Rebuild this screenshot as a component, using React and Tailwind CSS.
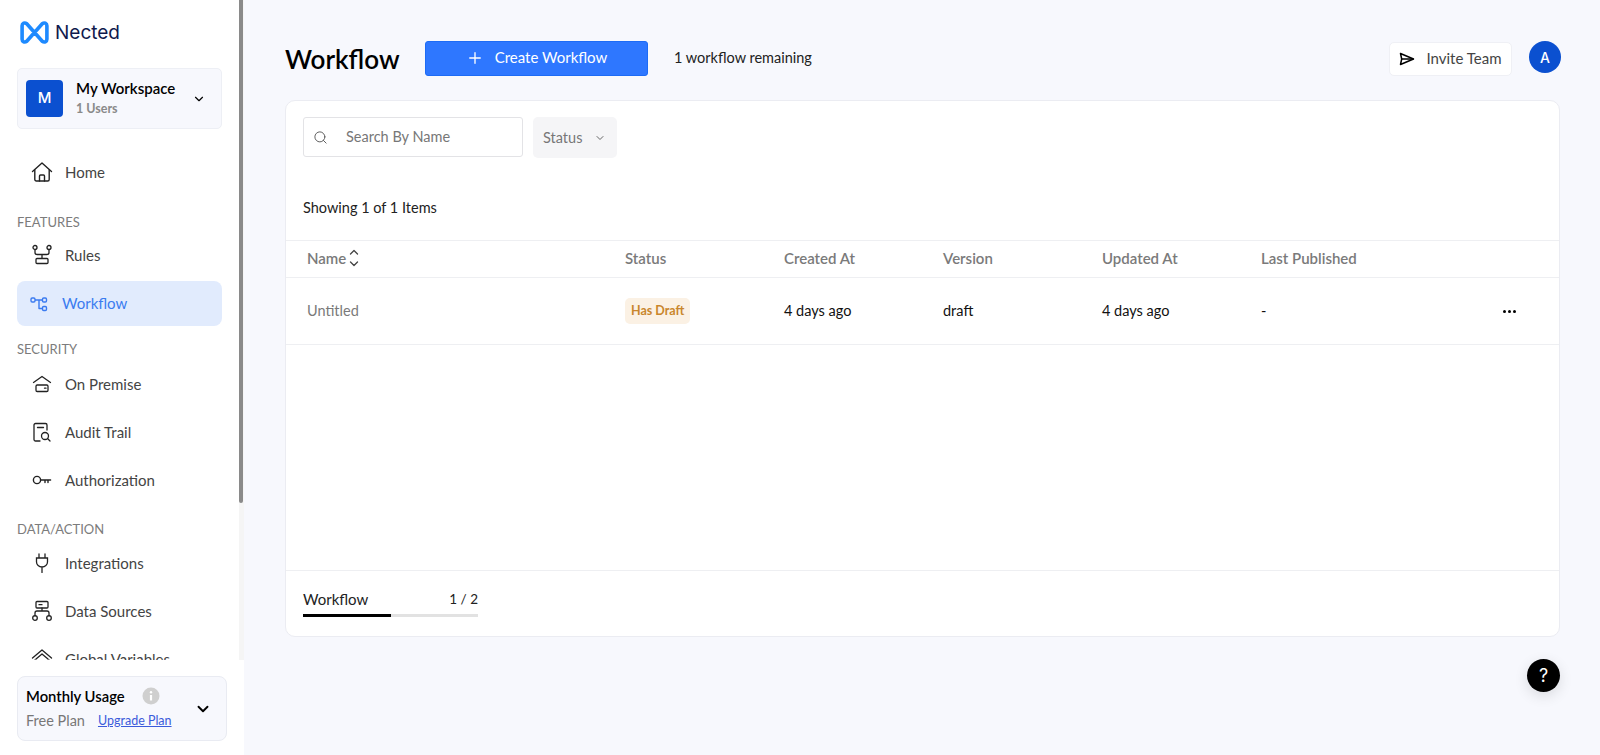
import React from 'react'
import { ChevronDown, Plus, Search } from 'lucide-react'

const Logo = () => (
  <svg width="31" height="25" viewBox="0 0 30 24" fill="none">
    <defs>
      <linearGradient id="lg" x1="0" y1="0" x2="30" y2="24">
        <stop offset="0" stopColor="#1e8bff" />
        <stop offset="1" stopColor="#1a55ee" />
      </linearGradient>
    </defs>
    <path d="M3 5.500C3 3 5.500 2 7.500 3.500L22.500 20.500C24.500 22 27 21 27 18.500V5.500C27 3 24.500 2 22.500 3.500L7.500 20.500C5.500 22 3 21 3 18.500Z" stroke="url(#lg)" strokeWidth="3.500" strokeLinejoin="round" />
  </svg>
)

const HomeIcon = () => (
  <svg width="22" height="22" viewBox="0 0 22 22" fill="none" stroke="#222" strokeWidth="1.4" strokeLinejoin="round" strokeLinecap="round">
    <path d="M1.500 10.500L11 2l9.500 8.500" />
    <path d="M3.800 9v9.500a1.500 1.500 0 0 0 1.500 1.500h11.400a1.500 1.500 0 0 0 1.500-1.500V9" />
    <path d="M8.500 20v-5a1 1 0 0 1 1-1h3a1 1 0 0 1 1 1v5" />
  </svg>
)
const RulesIcon = () => (
  <svg width="22" height="22" viewBox="0 0 22 22" fill="none" stroke="#222" strokeWidth="1.3" strokeLinejoin="round">
    <circle cx="4" cy="3.500" r="2" />
    <circle cx="18" cy="3.500" r="2" />
    <path d="M4 5.500v3a2 2 0 0 0 2 2h10a2 2 0 0 0 2-2v-3M11 10.500v4" />
    <rect x="5" y="14.500" width="12" height="5" rx="1" />
  </svg>
)
const WorkflowIcon = () => (
  <svg width="18" height="16" viewBox="0 0 18 16" fill="none" stroke="#3b7bf0" strokeWidth="1.400" strokeLinejoin="round">
    <rect x="1" y="2" width="4" height="4" rx="1.200" />
    <rect x="12.500" y="2" width="4" height="4" rx="1.200" />
    <rect x="12.500" y="10.500" width="4" height="4" rx="1.200" />
    <path d="M5 4h7.500M9 4v8.500h3.500" />
  </svg>
)
const PremiseIcon = () => (
  <svg width="20" height="20" viewBox="0 0 20 20" fill="none" stroke="#222" strokeWidth="1.300" strokeLinejoin="round" strokeLinecap="round">
    <path d="M1.500 8.500L10 2.500l8.500 6" />
    <rect x="4" y="11" width="12" height="6.500" rx="1.200" />
    <path d="M12.500 14.200h1.500" />
  </svg>
)
const AuditIcon = () => (
  <svg width="20" height="20" viewBox="0 0 20 20" fill="none" stroke="#222" strokeWidth="1.300" strokeLinecap="round">
    <path d="M8 19H3.500A1.500 1.500 0 0 1 2 17.500V3A1.500 1.500 0 0 1 3.500 1.500h10A1.500 1.500 0 0 1 15 3v5" />
    <path d="M5.500 5.500h6" />
    <circle cx="13" cy="14" r="3.500" />
    <path d="M15.500 16.500L18 19" />
  </svg>
)
const KeyIcon = () => (
  <svg width="20" height="12" viewBox="0 0 20 12" fill="none" stroke="#222" strokeWidth="1.400" strokeLinecap="round">
    <circle cx="5" cy="6" r="3.600" />
    <path d="M8.600 6h10M13 6v2.500M16 6v2.500" />
  </svg>
)
const PlugIcon = () => (
  <svg width="18" height="20" viewBox="0 0 18 20" fill="none" stroke="#222" strokeWidth="1.300" strokeLinecap="round">
    <path d="M6 1v4M12 1v4M3.500 5h11v4a5.500 5 0 0 1-11 0zM9 14v5.500" />
  </svg>
)
const DataIcon = () => (
  <svg width="22" height="22" viewBox="0 0 22 22" fill="none" stroke="#222" strokeWidth="1.300" strokeLinecap="round">
    <rect x="5" y="1.500" width="12" height="6.500" rx="1" />
    <path d="M11 8v3M4 16v-3a2 2 0 0 1 2-2h10a2 2 0 0 1 2 2v3M8 4.700h3" />
    <circle cx="4" cy="18" r="2.300" />
    <circle cx="18" cy="18" r="2.300" />
  </svg>
)
const GlobalIcon = () => (
  <svg width="22" height="22" viewBox="0 0 22 22" fill="none" stroke="#222" strokeWidth="1.300" strokeLinecap="round" strokeLinejoin="round">
    <path d="M1.500 10L11 2l9.500 8M5 11l6-5 6 5M7 13l2 2 2-2 2 2 2-2" />
    <path d="M4 12v8h14v-8" />
  </svg>
)
const SendIcon = () => (
  <svg width="16" height="14" viewBox="0 0 16 14" fill="none" stroke="#000" strokeWidth="1.500" strokeLinejoin="round">
    <path d="M1.500 1.500L14.500 7 1.500 12.500l1.200-5.500z" />
    <path d="M2.700 7h11.800" />
  </svg>
)
const SortIcon = () => (
  <svg width="10" height="18" viewBox="0 0 10 18" fill="none" stroke="#444" strokeWidth="1.300" strokeLinecap="round" strokeLinejoin="round">
    <path d="M1.500 5L5 1.500 8.500 5M1.500 13L5 16.500 8.500 13" />
  </svg>
)
const InfoDot = () => (
  <svg width="18" height="18" viewBox="0 0 18 18">
    <circle cx="9" cy="9" r="8.500" fill="#cfcfcf" />
    <circle cx="9" cy="5.300" r="1.200" fill="#fff" />
    <path d="M9 8v5.500" stroke="#fff" strokeWidth="2.200" />
  </svg>
)

function NavItem({ icon, label, className = '' }) {
  return (
    <div className={`flex items-center h-[48px] pb-[2px] pl-[14px] text-[15px] text-[#444] ${className}`}>
      <span className="w-[22px] flex justify-center shrink-0">{icon}</span>
      <span className="ml-[12px]">{label}</span>
    </div>
  )
}

function SectionLabel({ children, className = '' }) {
  return <div className={`text-[13px] leading-[16px] text-[#7c7c7c] ${className}`}>{children}</div>
}

const columns = 'grid grid-cols-[318px_159px_159px_159px_159px_1fr] pl-[21px]'

export default function App() {
  return (
    <div className="flex h-[755px] overflow-hidden bg-[#f7f8fd] text-[#111] font-['Lato',sans-serif]">
      <aside className="relative w-[244px] shrink-0 flex flex-col bg-white">
        <div className="h-[660px] overflow-hidden pl-[17px] pr-[22px]">
          <div className="flex items-center h-[68px] pl-[2px] pb-[4px]">
            <Logo />
            <span className="ml-[5px] mt-[2px] text-[19px] font-normal text-[#101a4d] font-['Inter',sans-serif]">Nected</span>
          </div>
          <div className="flex items-center h-[61px] px-[8px] rounded-[5px] border border-[#edeff5] bg-[#f7f8fd]">
            <div className="w-[37px] h-[37px] rounded-[4px] bg-[#0b50d0] text-white text-[15px] font-medium flex items-center justify-center font-['Inter',sans-serif]">M</div>
            <div className="ml-[13px] flex-1">
              <div className="text-[15px] leading-[19px] font-semibold text-black">My Workspace</div>
              <div className="text-[12.500px] leading-[20px] mt-[1px] font-bold text-[#8a8a8a]">1 Users</div>
            </div>
            <ChevronDown size={14} strokeWidth={2} className="mr-[7px] text-black" />
          </div>
          <NavItem icon={<HomeIcon />} label="Home" className="mt-[20px]" />
          <SectionLabel className="mt-[17px]">FEATURES</SectionLabel>
          <NavItem icon={<RulesIcon />} label="Rules" className="mt-[2px]" />
          <div className="flex items-center h-[45px] pl-[13px] rounded-[8px] bg-[#e1ebfd] text-[15px] text-[#3b7bf0] mt-[1px]">
            <WorkflowIcon />
            <span className="ml-[14px]">Workflow</span>
          </div>
          <SectionLabel className="mt-[15px]">SECURITY</SectionLabel>
          <NavItem icon={<PremiseIcon />} label="On Premise" className="mt-[4px]" />
          <NavItem icon={<AuditIcon />} label="Audit Trail" />
          <NavItem icon={<KeyIcon />} label="Authorization" />
          <SectionLabel className="mt-[16px]">DATA/ACTION</SectionLabel>
          <NavItem icon={<PlugIcon />} label="Integrations" className="mt-[3px]" />
          <NavItem icon={<DataIcon />} label="Data Sources" />
          <NavItem icon={<GlobalIcon />} label="Global Variables" />
        </div>
        <div className="absolute right-0 top-0 h-[660px] w-[5px] bg-[#f5f5f5]">
          <div className="w-[4px] h-[503px] bg-[#8a8a8a] rounded-b-full" />
        </div>
        <div className="mt-[16px] ml-[17px] mr-[17px] h-[65px] rounded-[8px] border border-[#e9ebf2] bg-[#f7f8fd] flex items-center pl-[8px] pr-[14px]">
          <div className="flex-1">
            <div className="flex items-center -mt-[1px]">
              <span className="text-[14.800px] leading-[20px] font-semibold text-black">Monthly Usage</span>
              <span className="ml-[17px]"><InfoDot /></span>
            </div>
            <div className="flex items-center mt-[6px]">
              <span className="text-[14.500px] leading-[18px] text-[#777]">Free Plan</span>
              <span className="ml-[13px] text-[12.500px] leading-[18px] text-[#3b5bdb] underline">Upgrade Plan</span>
            </div>
          </div>
          <ChevronDown size={18} strokeWidth={2.500} className="text-black" />
        </div>
      </aside>

      <main className="relative flex-1 min-w-0 pl-[41px] pr-[40px]">
        <header className="flex items-start h-[100px] pt-[41px] mr-[-1px]">
          <h1 className="w-[114px] text-[26px] leading-[37px] font-semibold text-black whitespace-nowrap">Workflow</h1>
          <button className="ml-[26px] w-[223px] h-[35px] pb-[2px] flex items-center justify-center rounded-[3px] border border-[#1d6bf5] bg-[#2e77ff] text-white text-[15px]">
            <Plus size={18} strokeWidth={1.800} />
            <span className="ml-[11px]">Create Workflow</span>
          </button>
          <span className="ml-[26px] text-[14.500px] leading-[33px] text-[#222]">1 workflow remaining</span>
          <button className="ml-auto w-[123px] h-[34px] mt-[1px] pb-[1px] flex items-center justify-center rounded-[5px] border border-[#eff0f5] bg-white text-[15px] text-[#444]">
            <SendIcon />
            <span className="ml-[11px]">Invite Team</span>
          </button>
          <div className="ml-[17px] w-[32px] h-[32px] rounded-full bg-[#0b50d0] text-white text-[14px] font-medium flex items-center justify-center font-['Inter',sans-serif]">A</div>
        </header>

        <section className="h-[537px] rounded-[10px] border border-[#ebecf2] bg-white flex flex-col">
          <div className="flex items-start px-[17px] pt-[16px] h-[90px]">
            <div className="w-[220px] h-[40px] flex items-center rounded-[3px] border border-[#e3e3e6] pl-[9px]">
              <Search size={15} strokeWidth={1.500} className="text-[#555]" />
              <span className="ml-[18px] text-[14.500px] text-[#777]">Search By Name</span>
            </div>
            <div className="ml-[10px] w-[84px] h-[41px] flex items-center rounded-[5px] bg-[#f5f5f7] pl-[10px] text-[14.500px] text-[#777]">
              Status
              <ChevronDown size={12} strokeWidth={2} className="ml-[12px] text-[#666]" />
            </div>
          </div>
          <div className="px-[17px] h-[49px] text-[14.500px] leading-[34px] text-[#222]">Showing 1 of 1 Items</div>
          <div className={`${columns} h-[38px] pb-[2px] items-center border-y border-[#eeeff2] text-[15px] font-semibold text-[#7a7a7a]`}>
            <div className="flex items-center gap-[3px]">Name <SortIcon /></div>
            <div>Status</div>
            <div>Created At</div>
            <div>Version</div>
            <div>Updated At</div>
            <div>Last Published</div>
          </div>
          <div className={`${columns} h-[67px] items-center border-b border-[#eeeff2] text-[14.500px] text-[#111]`}>
            <div className="text-[#7a7a7a]">Untitled</div>
            <div>
              <span className="inline-block h-[26px] px-[6px] rounded-[5px] bg-[#fbf1e4] text-[12.500px] leading-[26px] font-bold text-[#c9862c]">Has Draft</span>
            </div>
            <div>4 days ago</div>
            <div>draft</div>
            <div>4 days ago</div>
            <div className="flex items-center justify-between pr-[43px]">
              <span>-</span>
              <span className="flex gap-[2px]">
                <span className="w-[3px] h-[3px] rounded-full bg-black" />
                <span className="w-[3px] h-[3px] rounded-full bg-black" />
                <span className="w-[3px] h-[3px] rounded-full bg-black" />
              </span>
            </div>
          </div>
          <div className="flex-1" />
          <div className="h-[66px] border-t border-[#eeeff2] px-[17px] pt-[18px]">
            <div className="w-[175px] flex justify-between items-center text-[15px] leading-[20px] text-[#222]">
              <span>Workflow</span>
              <span className="text-[13.500px]">1 / 2</span>
            </div>
            <div className="w-[175px] h-[3px] mt-[5px] bg-[#e2e2e2]">
              <div className="w-[88px] h-[3px] bg-black" />
            </div>
          </div>
        </section>

        <div className="absolute right-[40px] top-[659px] w-[33px] h-[33px] rounded-full bg-black text-white text-[18px] flex items-center justify-center shadow-[0_4px_14px_rgba(0,0,0,0.12)] font-['Inter',sans-serif]">?</div>
      </main>
    </div>
  )
}
